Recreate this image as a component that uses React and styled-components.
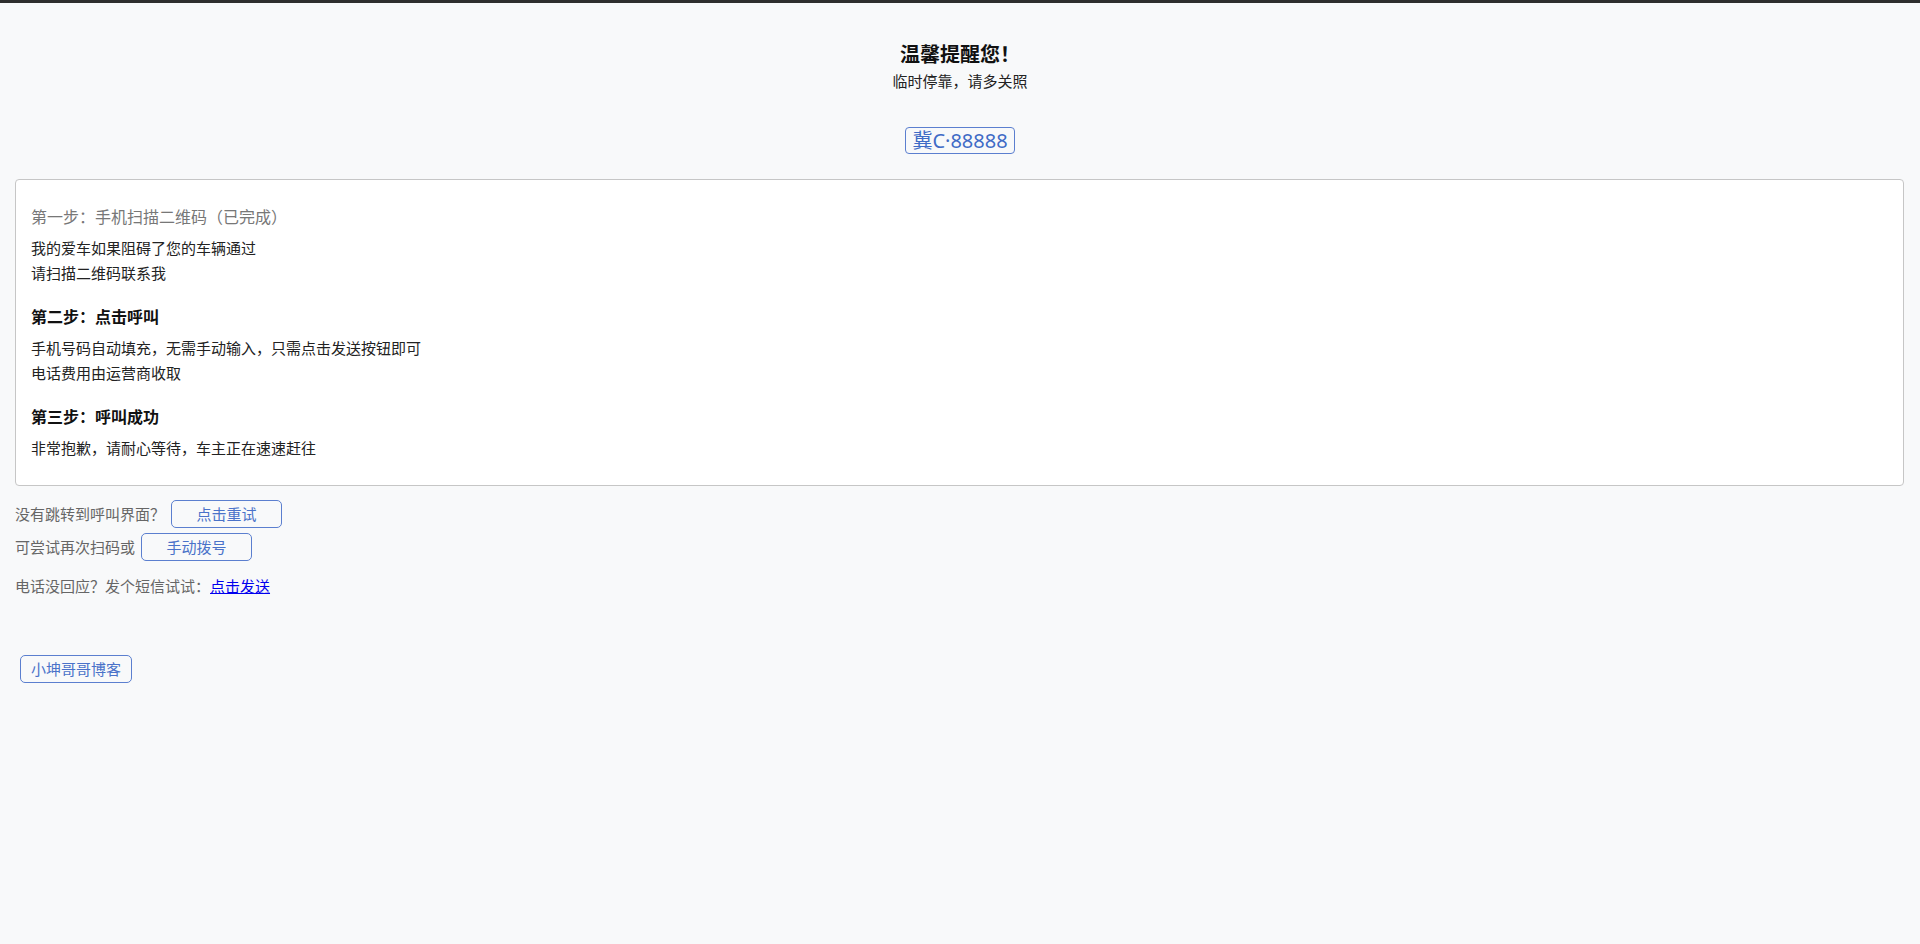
import React from "react";
import styled, { createGlobalStyle } from "styled-components";

const GlobalStyle = createGlobalStyle`
  html, body {
    margin: 0;
    padding: 0;
    background: #f8f9fa;
  }
  body {
    font-family: "Noto Sans CJK SC", "Noto Sans", sans-serif;
    color: #333;
  }
`;

const Page = styled.div`
  border-top: 3px solid #2e2e2e;
  min-height: 941px;
  box-sizing: border-box;
`;

const Header = styled.header`
  display: flex;
  flex-direction: column;
  align-items: center;
  padding-top: 37px;
`;

const Title = styled.h1`
  margin: 0;
  font-size: 20px;
  line-height: 27px;
  font-weight: 700;
  color: #111;
`;

const Subtitle = styled.p`
  margin: 3px 0 0;
  font-size: 15px;
  line-height: 22px;
  color: #222;
`;

const Plate = styled.div`
  margin-top: 35px;
  padding: 0 6px;
  border: 1px solid #5b7fcf;
  border-radius: 4px;
  font-family: "Noto Sans", "Noto Sans CJK SC", sans-serif;
  font-size: 20px;
  line-height: 25px;
  color: #3f6bc6;
`;

const Card = styled.section`
  margin: 25px 16px 0 15px;
  padding: 24px 15px 24px;
  background: #fff;
  border: 1px solid #c6c6c6;
  border-radius: 4px;
  display: flex;
  flex-direction: column;
  gap: 19px;
`;

const Step = styled.div`
  display: flex;
  flex-direction: column;
  gap: 8px;
`;

const StepTitle = styled.h3`
  margin: 0;
  font-size: 16px;
  line-height: 24px;
  font-weight: ${(p) => (p.$done ? 400 : 700)};
  color: ${(p) => (p.$done ? "#777" : "#111")};
`;

const StepText = styled.p`
  margin: 0;
  font-size: 15px;
  line-height: 24.5px;
  color: #222;
`;

const Help = styled.div`
  padding: 14px 15px 0;
  display: flex;
  flex-direction: column;
  align-items: flex-start;
`;

const Row = styled.div`
  display: flex;
  align-items: center;
  gap: 6px;
  height: 28px;
  margin-top: ${(p) => p.$mt || 0}px;
  font-size: 15px;
  color: #666;
`;

const TextRow = styled.p`
  margin: 13px 0 0;
  font-size: 15px;
  line-height: 24px;
  color: #666;
`;

const Link = styled.a`
  color: #0000ee;
  text-decoration: underline;
  cursor: pointer;
`;

const Button = styled.button`
  box-sizing: border-box;
  min-width: 111px;
  height: 28px;
  padding: 0 10px;
  margin-left: ${(p) => p.$ml || 0}px;
  border: 1px solid #5b7fcf;
  border-radius: 5px;
  background: transparent;
  font-family: "Noto Sans CJK SC", "Noto Sans", sans-serif;
  font-size: 15px;
  line-height: 26px;
  color: #4a72c9;
  cursor: pointer;
`;

const Footer = styled.div`
  margin-top: 57px;
`;

export default function App() {
  return (
    <>
      <GlobalStyle />
      <Page>
        <Header>
          <Title>温馨提醒您！</Title>
          <Subtitle>临时停靠，请多关照</Subtitle>
          <Plate>冀C·88888</Plate>
        </Header>
        <Card>
          <Step>
            <StepTitle $done>第一步：手机扫描二维码（已完成）</StepTitle>
            <div>
              <StepText>我的爱车如果阻碍了您的车辆通过</StepText>
              <StepText>请扫描二维码联系我</StepText>
            </div>
          </Step>
          <Step>
            <StepTitle>第二步：点击呼叫</StepTitle>
            <div>
              <StepText>手机号码自动填充，无需手动输入，只需点击发送按钮即可</StepText>
              <StepText>电话费用由运营商收取</StepText>
            </div>
          </Step>
          <Step>
            <StepTitle>第三步：呼叫成功</StepTitle>
            <div>
              <StepText>非常抱歉，请耐心等待，车主正在速速赶往</StepText>
            </div>
          </Step>
        </Card>
        <Help>
          <Row>
            <span>没有跳转到呼叫界面？</span>
            <Button>点击重试</Button>
          </Row>
          <Row $mt={5}>
            <span>可尝试再次扫码或</span>
            <Button>手动拨号</Button>
          </Row>
          <TextRow>
            电话没回应？发个短信试试：<Link>点击发送</Link>
          </TextRow>
          <Footer>
            <Button $ml={5}>小坤哥哥博客</Button>
          </Footer>
        </Help>
      </Page>
    </>
  );
}
